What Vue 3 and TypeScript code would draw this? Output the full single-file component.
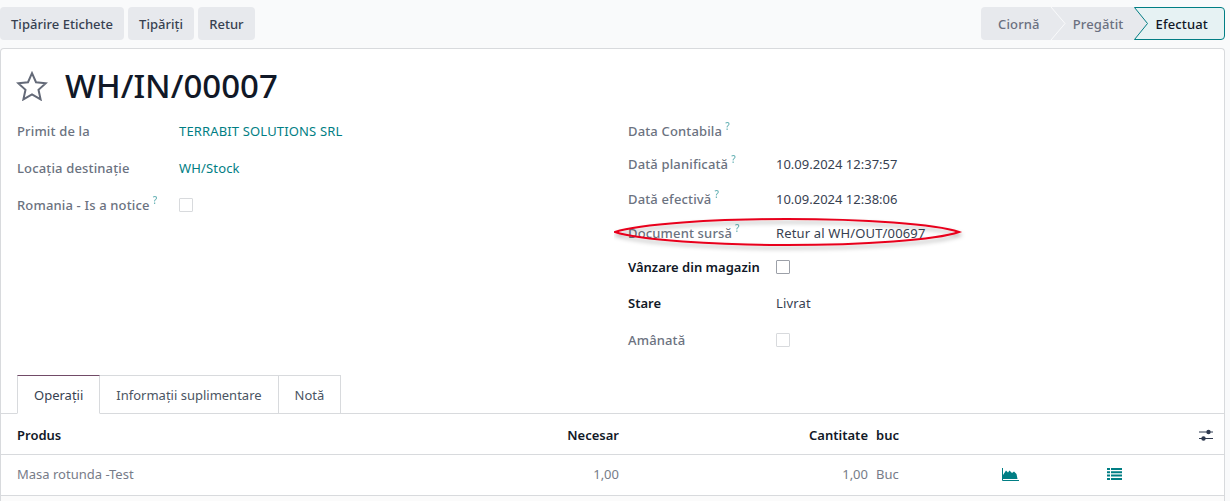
<script setup lang="ts">
const leftRows = [
  { label: 'Primit de la', value: 'TERRABIT SOLUTIONS SRL', kind: 'link' },
  { label: 'Locația destinație', value: 'WH/Stock', kind: 'link' },
  { label: 'Romania - Is a notice', help: true, kind: 'check' },
]
const rightRows = [
  { label: 'Data Contabila', help: true, kind: 'text', value: '', h: 33 },
  { label: 'Dată planificată', help: true, kind: 'text', value: '10.09.2024 12:37:57', h: 35, date: true },
  { label: 'Dată efectivă', help: true, kind: 'text', value: '10.09.2024 12:38:06', h: 34, date: true },
  { label: 'Document sursă', help: true, kind: 'text', value: 'Retur al WH/OUT/00697', h: 34 },
  { label: 'Vânzare din magazin', strong: true, kind: 'check', h: 36 },
  { label: 'Stare', strong: true, kind: 'text', value: 'Livrat', h: 37 },
  { label: 'Amânată', kind: 'check', h: 34 },
]
</script>

<template>
  <div class="page">
    <header class="bar">
      <div class="actions">
        <button class="btn">Tipărire Etichete</button>
        <button class="btn">Tipăriți</button>
        <button class="btn">Retur</button>
      </div>
      <div class="status">
        <svg class="status-bg" width="244" height="33" viewBox="0 0 244 33">
          <path d="M4 0H170V33H4Q0 33 0 29V4Q0 0 4 0Z" fill="#e7e9ed" />
          <path d="M70 0L84 16.5L70 33" fill="none" stroke="#f9fafb" stroke-width="1" />
          <path d="M153.5 .5H240Q243.5 .5 243.5 4V29Q243.5 32.5 240 32.5H153.5L166.5 16.5Z" fill="#e6f2f3" stroke="#017e84" stroke-width="1" />
        </svg>
        <span class="st st1">Ciornă</span>
        <span class="st st2">Pregătit</span>
        <span class="st st3">Efectuat</span>
      </div>
    </header>

    <main class="sheet">
      <div class="title">
        <svg class="star" width="32" height="30" viewBox="0 0 32 30">
          <path d="M16 2.2L20 11.2L29.8 12.2L22.5 18.8L24.6 28.4L16 23.5L7.4 28.4L9.5 18.8L2.2 12.2L12 11.2Z" fill="none" stroke="#646a78" stroke-width="2" stroke-linejoin="miter" />
        </svg>
        <h1>WH/IN/00007</h1>
      </div>

      <div class="groups">
        <div class="group-left">
          <div v-for="r in leftRows" :key="r.label" class="row">
            <div class="label">{{ r.label }}<sup v-if="r.help">?</sup></div>
            <a v-if="r.kind === 'link'" class="link">{{ r.value }}</a>
            <span v-else class="check"></span>
          </div>
        </div>
        <div class="group-right">
          <div v-for="r in rightRows" :key="r.label" class="rrow" :style="{ height: r.h + 'px' }">
            <div class="label" :class="{ strong: r.strong }">{{ r.label }}<sup v-if="r.help">?</sup></div>
            <span v-if="r.kind === 'check'" class="check"></span>
            <span v-else class="value" :class="{ date: r.date }">{{ r.value }}</span>
          </div>
        </div>
      </div>

      <svg class="ellipse" width="356" height="36" viewBox="0 0 356 36">
        <defs>
          <filter id="sh" x="-5%" y="-30%" width="110%" height="170%">
            <feDropShadow dx="1" dy="3" stdDeviation="2" flood-color="#000" flood-opacity="0.3" />
          </filter>
        </defs>
        <path d="M1 14C25 6 100 1 173 1C250 1 322 6 345 14C322 22 250 27 173 27C100 27 25 22 1 14Z" fill="none" stroke="#e8001c" stroke-width="2" filter="url(#sh)" />
      </svg>

      <nav class="tabs">
        <span class="tab active">Operații</span>
        <span class="tab">Informații suplimentare</span>
        <span class="tab">Notă</span>
      </nav>

      <div class="table">
        <div class="tr head">
          <span class="c-prod">Produs</span>
          <span class="c-nec">Necesar</span>
          <span class="c-qty">Cantitate</span>
          <span class="c-uom">buc</span>
          <svg class="opts" width="16" height="12" viewBox="0 0 16 12">
            <path d="M1 3H15M1 9.5H15" stroke="#2f3a50" stroke-width="1" />
            <circle cx="10.5" cy="3" r="2.2" fill="#2f3a50" />
            <circle cx="5.5" cy="9.5" r="2.2" fill="#2f3a50" />
          </svg>
        </div>
        <div class="tr body">
          <span class="c-prod">Masa rotunda -Test</span>
          <span class="c-nec">1,00</span>
          <span class="c-qty">1,00</span>
          <span class="c-uom">Buc</span>
          <span class="c-ic1">
            <svg width="17" height="13" viewBox="0 0 17 13">
              <path d="M1 11V7L4 2.5L6 4.5L7.5 2.5L10 5L12 3.5L14.5 6L15.5 11Z" fill="#017e84" />
              <path d="M.5 0V12.5H17" fill="none" stroke="#017e84" stroke-width="1" />
            </svg>
          </span>
          <span class="c-ic2">
            <svg width="15" height="12" viewBox="0 0 15 12">
              <path d="M0 0H3V2H0ZM4 0H15V2H4ZM0 3.3H3V5.3H0ZM4 3.3H15V5.3H4ZM0 6.6H3V8.6H0ZM4 6.6H15V8.6H4ZM0 9.9H3V11.9H0ZM4 9.9H15V11.9H4Z" fill="#017e84" />
            </svg>
          </span>
        </div>
        <div class="rest"></div>
      </div>
    </main>
  </div>
</template>

<style>
html, body { margin: 0; background: #f9fafb; overflow: hidden; }
</style>

<style scoped>
.page {
  width: 1230px;
  height: 501px;
  overflow: hidden;
  background: #f9fafb;
  font-family: "Noto Sans", "Open Sans", sans-serif;
  font-size: 13px;
  letter-spacing: .15px;
  color: #374151;
}
.bar {
  height: 48px;
  box-sizing: border-box;
  padding: 7px 5px 0 0;
  display: flex;
  justify-content: space-between;
  align-items: flex-start;
}
.actions { display: flex; gap: 4px; }
.btn {
  height: 33px;
  padding: 0 11px;
  border: 0;
  border-radius: 4px;
  background: #e7e9ed;
  color: #374151;
  font: 500 13px "Noto Sans", "Open Sans", sans-serif;
  letter-spacing: .03px;
}
.status {
  position: relative;
  width: 244px;
  height: 33px;
  display: flex;
  align-items: center;
}
.status-bg { position: absolute; left: 0; top: 0; }
.st { position: relative; font-weight: 500; color: #6b7080; white-space: nowrap; }
.st1 { margin-left: 17px; }
.st2 { margin-left: 33px; }
.st3 { margin-left: 32px; color: #111827; }
.sheet {
  position: relative;
  width: 1225px;
  height: 453px;
  box-sizing: border-box;
  background: #fff;
  border: 1px solid #d8dadd;
  border-radius: 4px 4px 0 0;
  border-bottom: 0;
}
.title {
  display: flex;
  align-items: center;
  height: 56px;
  padding: 18px 0 0 15px;
  box-sizing: border-box;
  gap: 17px;
}
.star { flex: none; }
.title h1 {
  margin: 0;
  font-size: 33px;
  font-weight: 500;
  line-height: 46px;
  letter-spacing: 0;
  color: #111827;
}
.groups {
  display: grid;
  grid-template-columns: 611px 1fr;
  padding: 17px 0 0 16px;
  height: 270px;
  box-sizing: border-box;
}
.row {
  display: flex;
  align-items: flex-start;
  height: 37px;
}
.rrow { display: flex; align-items: flex-start; }
.label {
  color: #6b7280;
  font-weight: 500;
  line-height: 18px;
}
.row .label { width: 162px; }
.rrow .label { width: 148px; }
.label.strong { color: #111827; font-weight: 600; letter-spacing: 0; }
sup {
  color: #017e84;
  opacity: .6;
  font-size: 10px;
  line-height: 0;
  margin-left: 3px;
  vertical-align: 6px;
}
.link { color: #017e84; line-height: 18px; }
.value { color: #374151; line-height: 18px; }
.value.date { letter-spacing: 0; }
.check {
  width: 12px;
  height: 12px;
  border: 1px solid #d8dadd;
  border-radius: 1px;
  margin-top: 2px;
  background: #fff;
}
.rrow .label.strong + .check { border-color: #9ca0a8; }
.ellipse { position: absolute; left: 613px; top: 169px; pointer-events: none; }
.tabs {
  display: flex;
  padding-left: 16px;
  height: 39px;
  box-sizing: border-box;
  border-bottom: 1px solid #d8dadd;
}
.tab {
  height: 39px;
  box-sizing: border-box;
  padding: 10px 16px 0;
  border: 1px solid #d8dadd;
  border-left: 0;
  line-height: 18px;
  letter-spacing: 0;
  color: #4b5563;
}
.tab.active {
  border-top: 1px solid #714b67;
  border-left: 1px solid #d8dadd;
  border-bottom: 1px solid #fff;
  color: #374151;
}
.tr {
  display: flex;
  align-items: center;
  height: 41px;
  box-sizing: border-box;
  padding-left: 16px;
  border-bottom: 1px solid #d8dadd;
  position: relative;
}
.head { font-weight: 600; color: #111827; letter-spacing: 0; padding-top: 1px; }
.body { color: #777c88; padding-bottom: 2px; letter-spacing: 0; }
.rest { height: 12px; background: #fbfbfb; }
.c-prod { width: 430px; }
.c-nec { width: 172px; text-align: right; }
.c-qty { width: 249px; text-align: right; }
.c-uom { width: 126px; margin-left: 8px; }
.c-ic1 { width: 105px; display: flex; }
.c-ic2 { width: 80px; display: flex; }
.opts { position: absolute; left: 1197px; top: 15px; }
</style>
